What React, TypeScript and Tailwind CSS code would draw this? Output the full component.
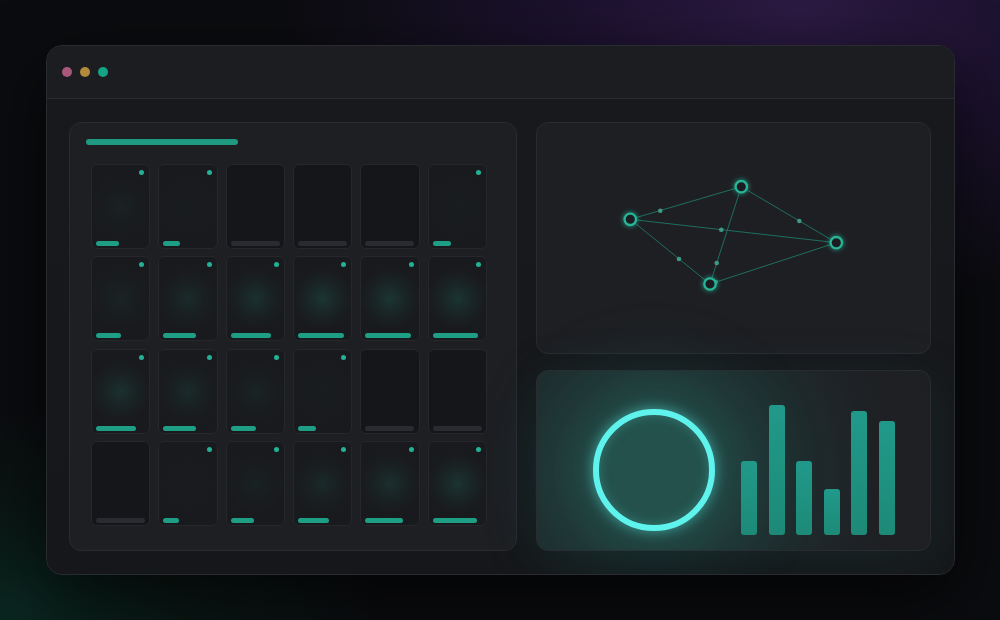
import React from "react";

type Cell = { w: number; active: boolean };

const raw: number[] = [
  23, 17, 0, 0, 0, 18,
  25, 33, 40, 46, 46, 45,
  40, 33, 25, 18, 0, 0,
  0, 16, 23, 31, 38, 44,
];

const cells: Cell[] = raw.map((w) => ({ w, active: w > 0 }));

function GridCell({ cell }: { cell: Cell }) {
  const alpha = cell.active ? Math.max(0, (cell.w - 14) / 32) * 0.22 : 0;
  return (
    <div
      className={
        "relative flex h-[85px] flex-col justify-between overflow-hidden rounded-[6px] border border-[#26272c] px-[4px] pb-[2px] pt-[5px] " +
        (cell.active ? "bg-[#191a1d]" : "bg-[#151619]")
      }
    >
      {cell.active && (
        <div
          className="pointer-events-none absolute inset-0"
          style={{
            background: `radial-gradient(circle at 50% 50%, rgba(34,150,128,${alpha}) 0%, rgba(34,150,128,${alpha * 0.4}) 30%, transparent 60%)`,
          }}
        />
      )}
      <div className="relative flex h-[5px] justify-end pr-[1px]">
        {cell.active && <div className="h-[5px] w-[5px] rounded-full bg-[#24b095]" />}
      </div>
      <div
        className={
          "relative h-[5px] rounded-full " + (cell.active ? "bg-[#1f9e86]" : "w-[49px] bg-[#2a2b30]")
        }
        style={cell.active ? { width: cell.w } : undefined}
      />
    </div>
  );
}

function Network() {
  const A = [93.3, 96.3];
  const B = [204.3, 63.7];
  const C = [299.3, 119.7];
  const D = [173, 161];
  const edges = [
    [A, B],
    [A, C],
    [A, D],
    [B, D],
    [B, C],
    [D, C],
  ];
  const dots = [
    [123.3, 87.7],
    [184.3, 106.7],
    [262.3, 98],
    [142, 136],
    [179.7, 140],
    [178.7, 159],
  ];
  return (
    <svg viewBox="0 0 393 230" className="block h-full w-full">
      <defs>
        <filter id="glow" x="-50%" y="-50%" width="200%" height="200%">
          <feGaussianBlur stdDeviation="2.5" result="b" />
          <feMerge>
            <feMergeNode in="b" />
            <feMergeNode in="SourceGraphic" />
          </feMerge>
        </filter>
      </defs>
      {edges.map(([p, q], i) => (
        <line key={i} x1={p[0]} y1={p[1]} x2={q[0]} y2={q[1]} stroke="#1f6e60" strokeWidth="1" />
      ))}
      {dots.map(([x, y], i) => (
        <circle key={i} cx={x} cy={y} r="2.3" fill="#3f9886" />
      ))}
      {[A, B, C, D].map(([x, y], i) => (
        <circle
          key={i}
          cx={x}
          cy={y}
          r="5.7"
          fill="#1b1d20"
          stroke="#26b597"
          strokeWidth="2.3"
          filter="url(#glow)"
        />
      ))}
    </svg>
  );
}

const bars = [74, 130, 74, 46, 124, 114];

export default function App() {
  return (
    <div className="h-[620px] w-[1000px] overflow-hidden bg-[#0b0c0f] bg-[radial-gradient(520px_300px_at_800px_10px,#2c1a42_0%,#1d1230_40%,transparent_100%),radial-gradient(360px_200px_at_20px_610px,#0a2620_0%,#0a1815_45%,transparent_100%)] pl-[46px] pt-[45px] font-['Inter',sans-serif]">
      <div className="flex h-[530px] w-[909px] flex-col overflow-hidden rounded-[16px] border border-[#2a2b30] bg-[#17181b] shadow-[0_24px_70px_rgba(0,0,0,0.65)]">
        {/* title bar */}
        <div className="flex h-[53px] shrink-0 items-center gap-[8px] border-b border-[#2b2c31] bg-[#1c1d21] pl-[15px]">
          <div className="h-[10px] w-[10px] rounded-full bg-[#a9587b]" />
          <div className="h-[10px] w-[10px] rounded-full bg-[#b3893a]" />
          <div className="h-[10px] w-[10px] rounded-full bg-[#15a386]" />
        </div>
        {/* body */}
        <div className="flex flex-1 gap-[19px] bg-[linear-gradient(180deg,#18191c,#16171a)] pb-[23px] pl-[22px] pr-[23px] pt-[23px]">
          {/* left panel */}
          <div className="flex h-[429px] w-[448px] flex-col rounded-[12px] border border-[#2a2b30] bg-[#1e1f23] p-[16px]">
            <div className="h-[6px] w-[152px] rounded-full bg-[#1f9a81]" />
            <div className="ml-[5px] mt-[19px] grid w-[396px] grid-cols-[repeat(6,minmax(0,1fr))] gap-x-[8px] gap-y-[7.4px]">
              {cells.map((c, i) => (
                <GridCell key={i} cell={c} />
              ))}
            </div>
          </div>
          {/* right column */}
          <div className="flex w-[395px] flex-col gap-[16px]">
            <div className="h-[232px] rounded-[12px] border border-[#2a2b30] bg-[#1e1f23]">
              <Network />
            </div>
            <div className="flex h-[181px] items-center gap-[26px] rounded-[12px] border border-[#2a2b30] bg-[#1e1f23] bg-[radial-gradient(circle_at_118px_99px,rgba(42,120,108,0.55)_0%,rgba(34,88,80,0.35)_35%,rgba(30,40,42,0.2)_75%,transparent_100%)] pb-[15px] pl-[56px] pt-[34px] shadow-[0_10px_60px_rgba(30,140,120,0.12)]">
              <div className="h-[122px] w-[122px] shrink-0 rounded-full border-[6px] border-[#5ff3ed] bg-[#24514c] shadow-[0_0_14px_rgba(95,243,237,0.55),0_0_90px_30px_rgba(40,170,150,0.16),inset_0_0_12px_rgba(95,243,237,0.25)]" />
              <div className="flex h-[130px] items-end gap-[11.6px]">
                {bars.map((h, i) => (
                  <div
                    key={i}
                    className="w-[16px] rounded-[3px] bg-[#1f917d] bg-[linear-gradient(180deg,#21998a_0%,#1d8a77_100%)]"
                    style={{ height: h }}
                  />
                ))}
              </div>
            </div>
          </div>
        </div>
      </div>
    </div>
  );
}
